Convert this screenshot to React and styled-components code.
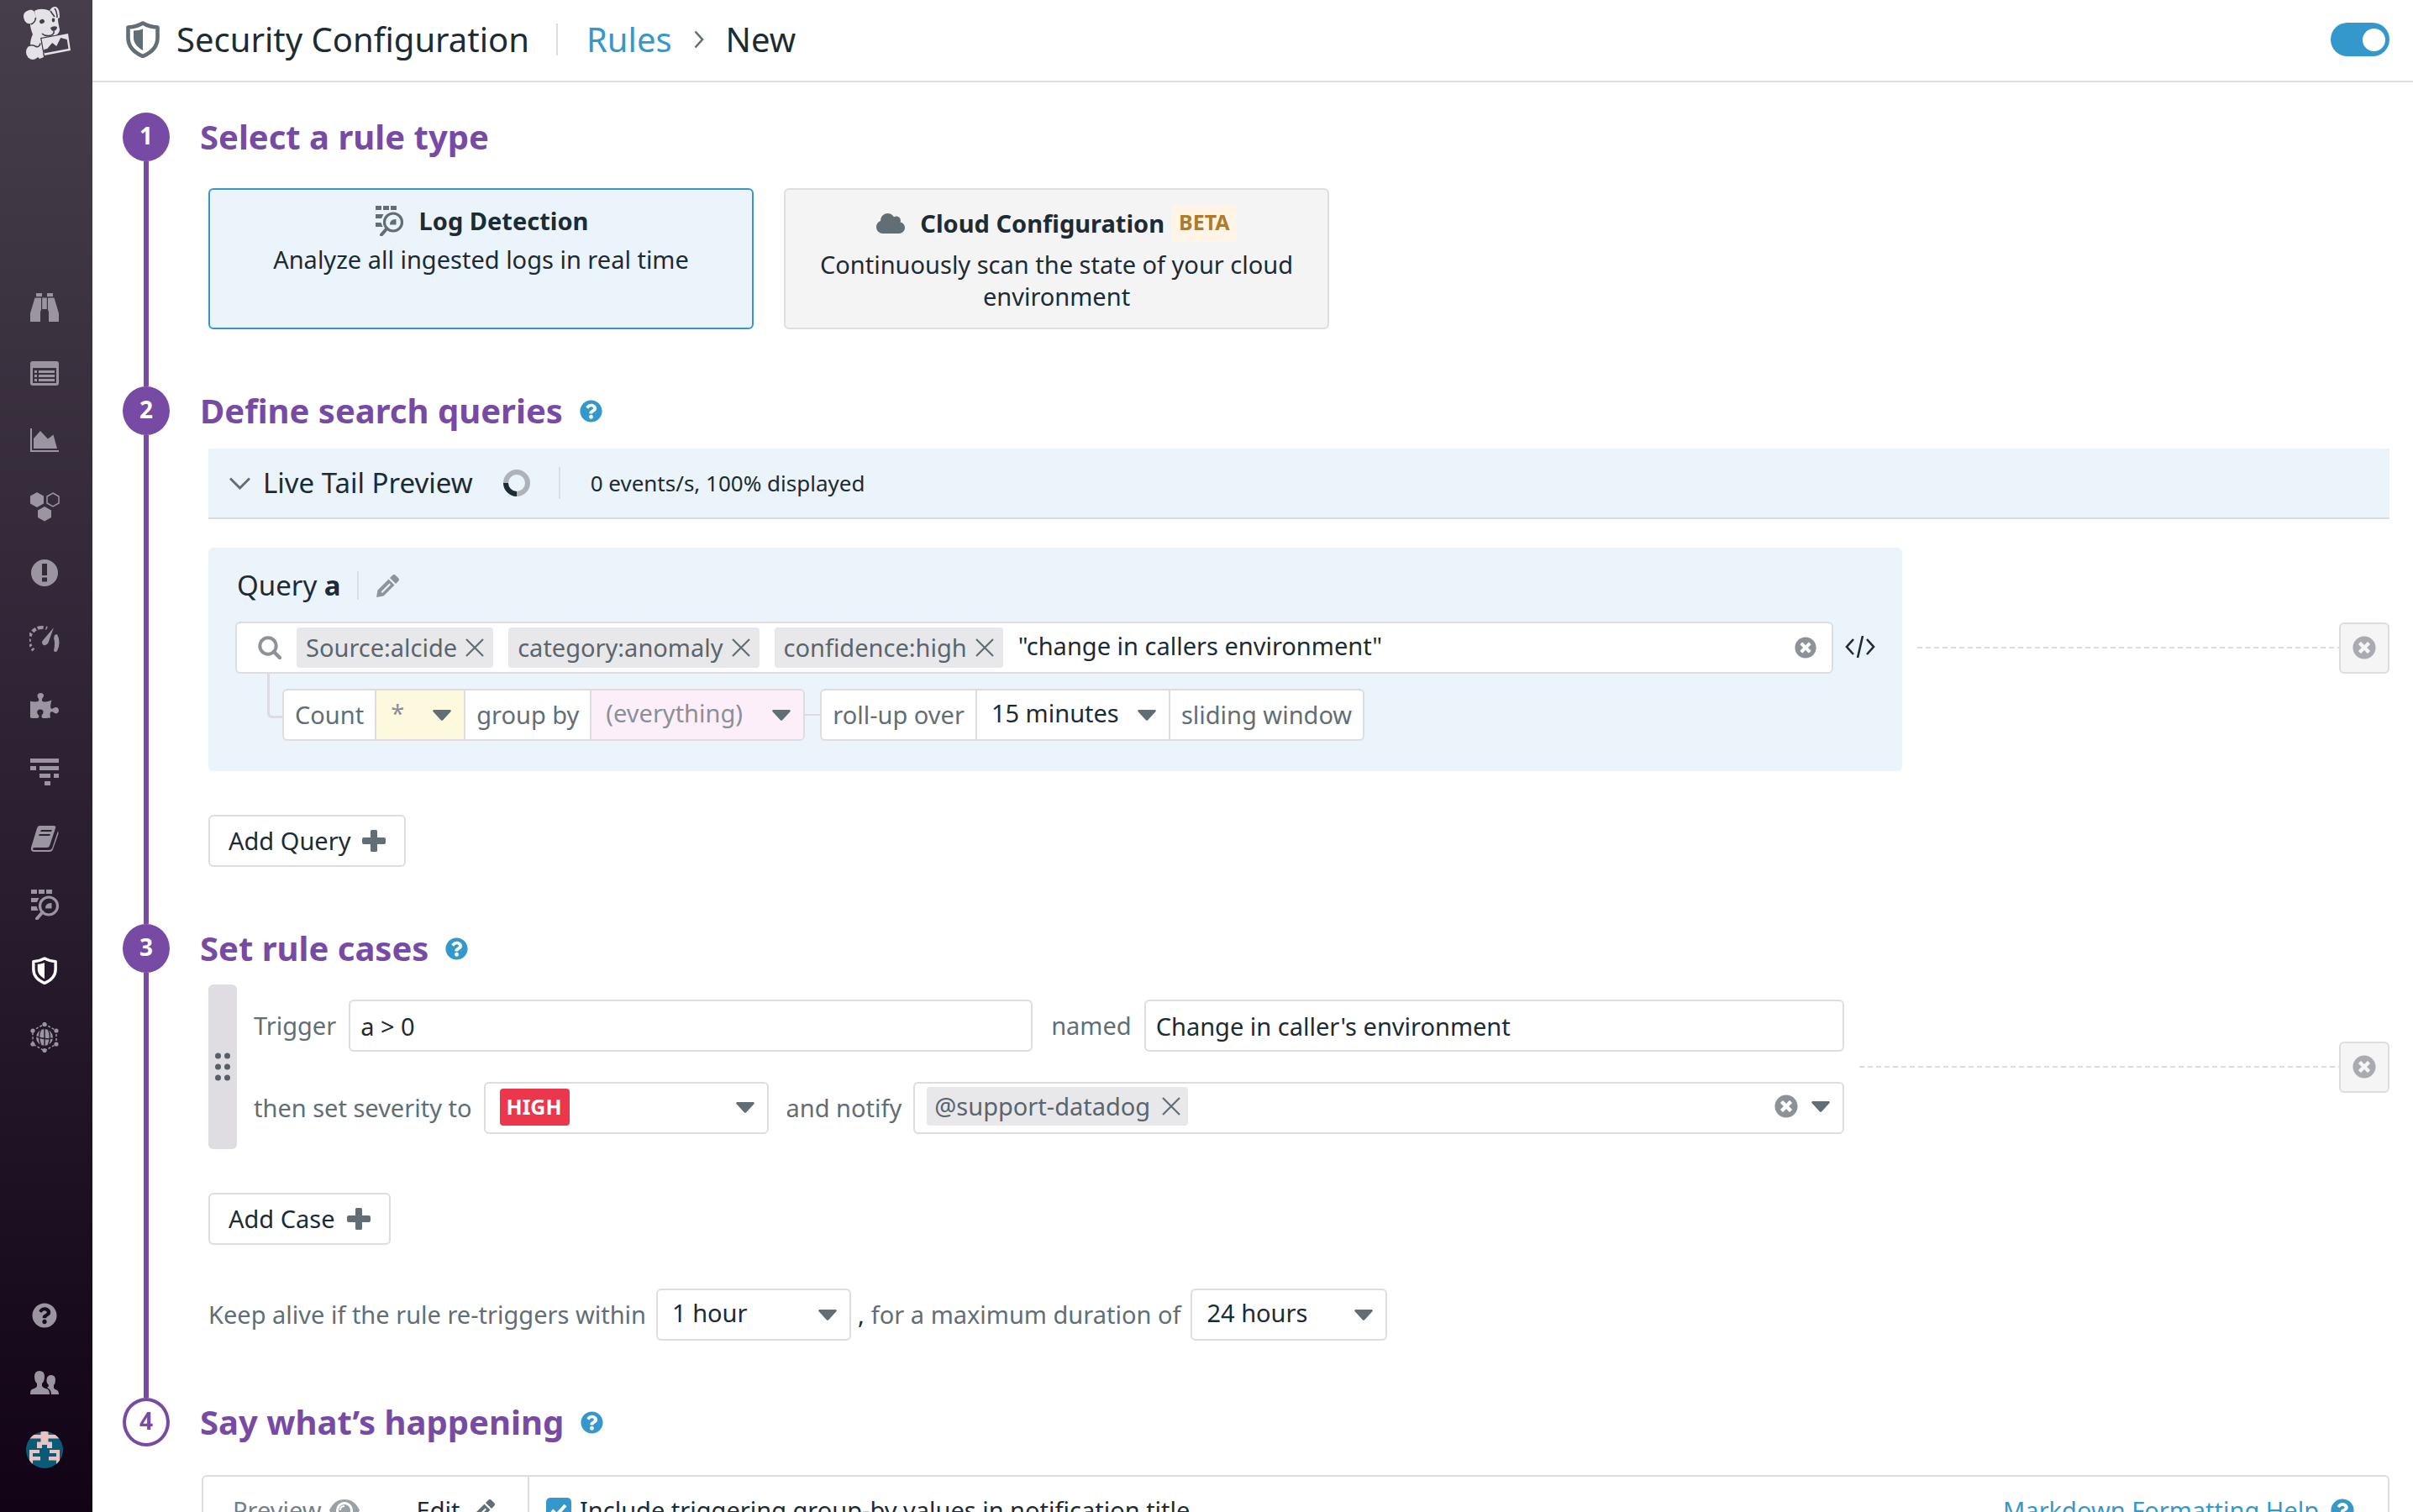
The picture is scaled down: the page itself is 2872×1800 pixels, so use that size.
import styled, { createGlobalStyle } from "styled-components";
import { FaCloud, FaPuzzlePiece, FaQuestionCircle, FaTimesCircle } from "react-icons/fa";

const purple = "#774aa4";
const blue = "#3598cc";
const ink = "#1c2b34";
const gray = "#626e75";
const line = "#dddddf";
const pale = "#ebf4fa";

const GlobalStyle = createGlobalStyle`
  * {
    box-sizing: border-box;
  }
  body {
    margin: 0;
    background: #fff;
    color: ${ink};
    font-family: "Noto Sans", sans-serif;
    font-size: 29px;
    line-height: 38px;
  }
  h1, h2, h3, p {
    margin: 0;
    font-weight: 400;
  }
  a {
    color: ${blue};
    text-decoration: none;
  }
  button, input, select {
    margin: 0;
    padding: 0;
    border: none;
    background: none;
    color: inherit;
    font: inherit;
    outline: none;
  }
  svg {
    display: block;
    flex: none;
  }
`;

/* ---------- shell ---------- */

const Shell = styled.div`
  display: flex;
  height: 100vh;
`;

const Sidebar = styled.nav`
  flex: none;
  display: flex;
  flex-direction: column;
  align-items: center;
  width: 110px;
  padding: 8px 4px 34px 0;
  background: linear-gradient(#463f4b, #3b3240 22%, #281c2f 60%, #120316);
`;

const Logo = styled.a`
  margin: 0 0 254px 5px;
  color: #e4e2e6;
`;

const NavItem = styled.a`
  display: flex;
  align-items: center;
  justify-content: center;
  width: 100%;
  height: ${(p) => (p.$low ? 80 : 79)}px;
  color: ${(p) => (p.$active ? "#fff" : "#9a95a0")};
`;

const Spacer = styled.div`
  flex: 1;
`;

const Main = styled.main`
  flex: 1;
  min-width: 0;
  overflow-y: auto;
  scrollbar-width: none;
`;

/* ---------- header ---------- */

const Header = styled.header`
  display: flex;
  align-items: center;
  height: 98px;
  padding: 0 28px 2px 40px;
  border-bottom: 2px solid ${line};
  font-size: 40px;
  line-height: 56px;
  color: ${gray};
`;

const PageTitle = styled.h1`
  margin-left: 20px;
  font-size: 40px;
  color: ${ink};
`;

const Divider = styled.span`
  width: 2px;
  height: ${(p) => p.$height || 38}px;
  background: #dddce2;
`;

const Crumbs = styled.div`
  display: flex;
  align-items: center;
  gap: 26px;
  flex: 1;
  margin-left: 32px;
`;

const CrumbLink = styled.a`
  margin-left: 8px;
`;

const Crumb = styled.span`
  color: ${ink};
`;

const Toggle = styled.input`
  appearance: none;
  display: flex;
  align-items: center;
  justify-content: flex-end;
  width: 70px;
  height: 40px;
  padding: 0 5px;
  border-radius: 20px;
  background: ${blue};

  &::before {
    content: "";
    width: 27px;
    height: 27px;
    border-radius: 50%;
    background: #fff;
  }
`;

/* ---------- steps ---------- */

const Steps = styled.div`
  padding: 36px 28px 0 36px;
`;

const StepRow = styled.section`
  display: flex;
  gap: 36px;
`;

const Rail = styled.div`
  flex: none;
  display: flex;
  flex-direction: column;
  align-items: center;
  width: 56px;
`;

const StepNumber = styled.span`
  display: flex;
  align-items: center;
  justify-content: center;
  width: 56px;
  height: 58px;
  padding-bottom: 4px;
  border: 4px solid ${purple};
  border-radius: 50%;
  background: ${(p) => (p.$open ? "#fff" : purple)};
  color: ${(p) => (p.$open ? purple : "#fff")};
  font-size: 28px;
  font-weight: 700;
`;

const RailLine = styled.span`
  flex: 1;
  width: 6px;
  background: ${purple};
`;

const StepContent = styled.div`
  flex: 1;
  min-width: 0;
  padding-bottom: 68px;
`;

const StepHead = styled.div`
  display: flex;
  align-items: center;
  gap: 20px;
  height: 58px;
  color: ${purple};
`;

const StepTitle = styled.h2`
  font-size: 40px;
  font-weight: 700;
`;

const HelpLink = styled.a`
  color: ${blue};
`;

const StepBody = styled.div`
  padding: ${(p) => p.$top}px 0 0 ${(p) => (p.$wide ? 2 : 10)}px;
`;

function Step({ number, title, help, top, wide, last, children }) {
  return (
    <StepRow>
      <Rail>
        <StepNumber $open={last}>{number}</StepNumber>
        {!last && <RailLine />}
      </Rail>
      <StepContent>
        <StepHead>
          <StepTitle>{title}</StepTitle>
          {help && (
            <HelpLink href="#help" aria-label="Help">
              <FaQuestionCircle size={27} />
            </HelpLink>
          )}
        </StepHead>
        <StepBody $top={top} $wide={wide}>{children}</StepBody>
      </StepContent>
    </StepRow>
  );
}

/* ---------- rule types ---------- */

const Cards = styled.div`
  display: flex;
  gap: 36px;
`;

const Card = styled.button`
  flex: 0 0 25%;
  display: flex;
  flex-direction: column;
  align-items: center;
  gap: 8px;
  height: 168px;
  padding: 18px 40px;
  border: 2px solid ${(p) => (p.$selected ? blue : "#dedede")};
  border-radius: 6px;
  background: ${(p) => (p.$selected ? pale : "#f4f4f4")};
`;

const CardTitle = styled.span`
  display: flex;
  align-items: center;
  gap: 18px;
  font-weight: 700;
  color: ${ink};

  svg {
    color: ${gray};
  }
`;

const Beta = styled.span`
  height: 44px;
  margin-left: -9px;
  padding: 0 8px;
  background: #fef5e7;
  color: #b07b29;
  font-size: 25px;
  line-height: 40px;
`;

/* ---------- form pieces ---------- */

const Button = styled.button`
  display: flex;
  align-items: center;
  gap: 14px;
  height: 62px;
  margin-top: 52px;
  padding: 0 22px;
  border: 2px solid ${line};
  border-radius: 6px;
  background: #fff;

  svg {
    color: ${gray};
  }
`;

const Field = styled.input`
  flex: ${(p) => p.$grow} 1 0;
  min-width: 0;
  height: 62px;
  padding: 0 12px;
  border: 2px solid ${line};
  border-radius: 6px;
  background: #fff;
`;

const Label = styled.label`
  flex: none;
  color: ${gray};
`;

const SelectWrap = styled.div`
  flex: none;
  display: grid;
  align-items: center;
  width: ${(p) => p.$width}px;
  height: 62px;
  border: 2px solid ${line};
  border-radius: 6px;
  background: #fff;

  svg {
    grid-area: 1 / 1;
    justify-self: end;
    margin-right: 15px;
    pointer-events: none;
    color: ${gray};
  }
`;

const SelectInput = styled.select`
  grid-area: 1 / 1;
  appearance: none;
  width: 100%;
  height: 58px;
  padding: 0 40px 4px 17px;
`;

const CaretIcon = () => (
  <svg width="22" height="13" viewBox="0 0 22 13" fill="currentColor" aria-hidden="true">
    <path d="M1.600 0h18.800c1.300 0 1.800 1.300 1 2.200L12.200 12.200c-.7.8-1.700.8-2.400 0L.6 2.200C-.2 1.300.300 0 1.600 0z" />
  </svg>
);

function Select({ id, value, width }) {
  return (
    <SelectWrap $width={width}>
      <SelectInput id={id}>
        <option>{value}</option>
      </SelectInput>
      <CaretIcon />
    </SelectWrap>
  );
}

const Tag = styled.span`
  flex: none;
  display: flex;
  align-items: center;
  gap: ${(p) => p.$gap || 10}px;
  height: ${(p) => (p.$gap ? 46 : 48)}px;
  padding: 0 ${(p) => (p.$gap ? 9 : 11)}px;
  border-radius: 4px;
  background: #e8e8eb;
  color: #5b656d;
`;

const PlainButton = styled.button`
  flex: none;
  color: ${(p) => p.$color || gray};
`;

const CrossIcon = () => (
  <svg width="22" height="22" viewBox="0 0 22 22" stroke="currentColor" strokeWidth="2.200" aria-hidden="true">
    <path d="M1 1l20 20M21 1L1 21" />
  </svg>
);

function RemovableTag({ text, gap }) {
  return (
    <Tag $gap={gap}>
      {text}
      <PlainButton aria-label={`Remove ${text}`}>
        <CrossIcon />
      </PlainButton>
    </Tag>
  );
}

const RemovableRow = styled.div`
  display: flex;
  align-items: center;
  margin-top: ${(p) => p.$top || 0}px;
`;

const RemoveSide = styled.div`
  flex: 1;
  display: flex;
  align-items: center;
  padding: 0 0 ${(p) => (p.$raised ? 28 : 0)}px 18px;
`;

const Dashes = styled.div`
  flex: 1;
  height: 2px;
  background: repeating-linear-gradient(90deg, #dcdcdf 0 6px, transparent 6px 10px);
`;

const RemoveButton = styled.button`
  flex: none;
  display: flex;
  align-items: center;
  justify-content: center;
  width: 60px;
  height: 61px;
  border: 2px solid ${line};
  border-radius: 6px;
  background: #f5f5f5;
  color: #a9abb0;
`;

function Remove({ label, raised }) {
  return (
    <RemoveSide $raised={raised}>
      <Dashes />
      <RemoveButton aria-label={label}>
        <FaTimesCircle size={28} />
      </RemoveButton>
    </RemoveSide>
  );
}

/* ---------- queries ---------- */

const TailBar = styled.div`
  display: flex;
  align-items: center;
  height: 84px;
  padding-left: 25px;
  border-bottom: 2px solid #dadde0;
  background: ${pale};
`;

const TailTitle = styled.h3`
  margin: 0 36px 0 15px;
  font-size: 33px;
`;

const TailStats = styled.span`
  margin-left: 36px;
  font-size: 26px;
`;

const Spinner = styled.span`
  width: 32px;
  height: 32px;
  margin-right: 34px;
  border: 6px solid #adb3b9;
  border-left-color: ${ink};
  border-radius: 50%;
  transform: rotate(-45deg);
`;

const QueryPanel = styled.div`
  width: calc(100% - 580px);
  padding: 28px 32px 36px;
  border-radius: 6px;
  background: ${pale};
`;

const QueryHead = styled.div`
  display: flex;
  align-items: center;
  gap: 21px;
  height: 34px;
  margin: 0 0 26px 2px;
  color: #8d959b;
`;

const QueryName = styled.h3`
  margin-right: -2px;
  font-size: 33px;
  color: ${ink};
`;

const QueryLine = styled.div`
  display: flex;
  align-items: center;
  gap: 14px;
`;

const InputBox = styled.div`
  flex: 1;
  display: flex;
  align-items: center;
  gap: ${(p) => (p.$notify ? 16 : 18)}px;
  min-width: 0;
  height: 62px;
  padding: ${(p) => (p.$notify ? "0 15px 4px 14px" : "0 18px 0 25px")};
  border: 2px solid ${line};
  border-radius: 6px;
  background: #fff;
  color: #8d9298;
`;

const SearchInput = styled.input`
  flex: 1;
  min-width: 0;
  padding-bottom: 4px;
  color: ${ink};
`;

const Aggregation = styled.div`
  display: flex;
  padding-left: 38px;
`;

const Elbow = styled.span`
  width: 18px;
  height: 53px;
  border: solid #dcdae2;
  border-width: 0 0 3px 3px;
  border-bottom-left-radius: 6px;
`;

const Link = styled.span`
  align-self: center;
  width: 18px;
  height: 2px;
  margin-top: 18px;
  background: #dcdae2;
`;

const Group = styled.div`
  display: flex;
  height: 62px;
  margin-top: 18px;
  border: 2px solid ${line};
  border-radius: 6px;
  background: #fff;
  overflow: hidden;
`;

const GroupLabel = styled.span`
  padding: 0 13px;
  color: ${gray};
  line-height: 58px;
`;

const GroupSelect = styled(SelectWrap)`
  height: 58px;
  border-width: 0 2px;
  border-radius: 0;
  background: ${(p) => p.$tint || "#fff"};
  color: ${(p) => (p.$tint ? "#8b9097" : ink)};
  ${(p) => p.$end && "border-right: none;"}
`;

/* ---------- cases ---------- */

const Case = styled.div`
  display: flex;
  gap: 20px;
  width: calc(100% - 649px);
`;

const Handle = styled.div`
  flex: none;
  display: flex;
  align-items: center;
  justify-content: center;
  width: 34px;
  border-radius: 6px;
  background: #dfdce2;
  color: #575f66;
`;

const CaseRows = styled.div`
  flex: 1;
  display: flex;
  flex-direction: column;
  gap: 36px;
  min-width: 0;
  padding: 18px 0;
`;

const FormRow = styled.div`
  display: flex;
  align-items: center;
  gap: ${(p) => p.$gap}px;
  margin-top: ${(p) => p.$top || 0}px;
`;

const MidLabel = styled(Label)`
  margin-left: 7px;
`;

const SeverityBox = styled.div`
  flex: none;
  display: flex;
  align-items: center;
  justify-content: space-between;
  width: 339px;
  height: 62px;
  padding: 0 15px 2px 17px;
  border: 2px solid ${line};
  border-radius: 6px;
  color: ${gray};
`;

const SeveritySelect = styled.select`
  appearance: none;
  height: 44px;
  padding: 0 8px 2px;
  border-radius: 4px;
  background: #eb364b;
  color: #fff;
  font-size: 25px;
  font-weight: 700;
`;

const Comma = styled.span`
  margin: 0 -4px;
`;

/* ---------- message ---------- */

const Editor = styled.div`
  display: flex;
  height: 420px;
  border: 2px solid ${line};
  border-radius: 6px;
`;

const Tabs = styled.div`
  flex: none;
  display: flex;
  align-items: center;
  gap: 68px;
  width: 388px;
  height: 80px;
  padding-left: 35px;
  border-right: 2px solid ${line};
`;

const Tab = styled.button`
  display: flex;
  align-items: center;
  gap: ${(p) => (p.$active ? 15 : 9)}px;
  color: ${(p) => (p.$active ? ink : "#747e85")};

  svg {
    color: ${gray};
  }
`;

const EditorBar = styled.div`
  flex: 1;
  display: flex;
  align-items: center;
  justify-content: space-between;
  height: 80px;
  padding: 0 40px 0 20px;
`;

const CheckLabel = styled.label`
  display: flex;
  align-items: center;
  gap: 10px;
`;

const CheckWrap = styled.span`
  display: grid;
  place-items: center;

  svg, input {
    grid-area: 1 / 1;
  }
  svg {
    z-index: 1;
    pointer-events: none;
  }
`;

const Check = styled.input`
  appearance: none;
  width: 30px;
  height: 30px;
  border-radius: 5px;
  background: ${blue};
`;

const HelpText = styled.a`
  display: flex;
  align-items: center;
  gap: 14px;
`;

/* ---------- icons ---------- */

const Icon = ({ size = 36, box = 36, children }) => (
  <svg width={size} height={size} viewBox={`0 0 ${box} ${box}`} fill="currentColor" aria-hidden="true">
    {children}
  </svg>
);

const DogIcon = () => (
  <svg width="56" height="64" viewBox="0 0 56 64" fill="currentColor" aria-hidden="true">
    <path d="M7 4c4-1 7 2 7 6 1 5-1 9-5 10-5 1-8-2-9-8C0 7 3 5 7 4z" />
    <path d="M13 5c5-3 12-3 18 0 2-4 4-5 7-5 4 1 5 6 5 13l-2 1c0 5 1 8 2 13 0 3-2 6-5 7l-17 4 3 22-5 2c-3-3-6-8-11-16 0-5 1-9 3-13C9 28 8 24 8 21c5-1 7-5 6-12z" />
    <ellipse cx="11" cy="54" rx="8" ry="9" />
    <path
      d="M20 43.500q-1 5-5 4-4-3-9-1M9 21q5-2 5.500-8M32 5q2 3 5 7M22 32q4 4 11 2 4-2 3-5M37 2q3 4 3 11"
      fill="none"
      stroke="#453e4a"
      strokeWidth="1.600"
    />
    <ellipse cx="22" cy="17.500" rx="3" ry="2.600" fill="#453e4a" transform="rotate(-25 22 17.500)" />
    <ellipse cx="35.500" cy="16" rx="1.800" ry="2.400" fill="#453e4a" />
    <path d="M32 25q4-3 8-1 0 4-4 5-3 0-4-4z" fill="#453e4a" />
    <path d="M20 37l34-6 3 22-33 6z" fill="#453e4a" />
    <path fillRule="evenodd" d="M21.500 38L53 32l3 20-31 6zM24 55.500l29.500-5.500-1.800-11-7.500-2-5 10-5-4-6 7-4 1z" />
  </svg>
);

const BinocularsIcon = () => (
  <Icon>
    <path d="M8 1h7v4H8zM21 1h7v4h-7zM6.500 6.500H14V21q-1 1-1 3v11H1V25zM29.500 6.500H22V21q1 1 1 3v11h12V25zM15.200 6.500h5.600V20h-5.600z" />
  </Icon>
);

const ListIcon = () => (
  <Icon>
    <path fillRule="evenodd" d="M4 3h28q3 0 3 3v23q0 3-3 3H4q-3 0-3-3V6q0-3 3-3zM4 11v18h28V11z" />
    <path d="M6 14h3v3H6zM11 14h19v3H11zM6 19h3v3H6zM11 19h19v3H11zM6 24h3v3H6zM11 24h19v3H11z" />
  </Icon>
);

const AreaIcon = () => (
  <Icon>
    <path d="M1 4h2v26h32v2H1zM5 28V16l8-9 9 9.500 6.500-5L33 28z" />
  </Icon>
);

const HexIcon = () => (
  <Icon>
    <path d="M9 1l8 4.500v9L9 19l-8-4.500v-9zM18 18l8 4.500v8.500L18 35.500l-8-4.500v-8.500z" />
    <path d="M28 2l7 4v8l-7 4-7-4V6z" fill="none" stroke="currentColor" strokeWidth="1.500" />
  </Icon>
);

const AlertIcon = () => (
  <Icon>
    <path fillRule="evenodd" d="M18 2a16 16 0 100 32 16 16 0 000-32zM15 7h6v14h-6zM15 23.500h6v5h-6z" />
  </Icon>
);

const GaugeIcon = () => (
  <Icon>
    <path d="M29 4L22.500 22q-2 4-5.500 3-3-2-1.500-5z" />
    <path d="M30 13l3-1q5 10 0 20-2 2-4 0 2-10 0-15z" />
    <path
      d="M5 31A15.500 15.500 0 0121 5"
      fill="none"
      stroke="currentColor"
      strokeWidth="4"
      strokeDasharray="2.500 3 3 3 3.500 3 4 2.500 5 2 7 3"
    />
  </Icon>
);

const TraceIcon = () => (
  <Icon>
    <path d="M1 2h34v5H1zM1 11h7v5H1zM12 11h23v5H12zM12 20h13v5H12zM29 20h6v5h-6zM18 29h7v5h-7z" />
  </Icon>
);

const BookIcon = () => (
  <Icon>
    <path
      fillRule="evenodd"
      d="M12 3h17q3 0 2 3l-7 21q-1 2-3 2H6q-2 0-2 1.500T6 32h17q3 0 4-2l7-21q1 3 0 5l-6 17q-1 3-4 3H6q-5 0-4-5L9 6q1-3 3-3zM14 8l-1 2h13l1-2zM12 13l-1 2h13l1-2z"
    />
  </Icon>
);

const LogsIcon = () => (
  <Icon>
    <path d="M2 0h7v5H2zM11 0h7v5h-7zM20 0h7v5h-7zM2 10h9.500L9 15H2zM2 20h6.500l2 5H2z" />
    <circle cx="23" cy="19.500" r="10.500" fill="none" stroke="currentColor" strokeWidth="3.200" />
    <path d="M15.500 27L9 34.500" stroke="currentColor" strokeWidth="4" strokeLinecap="round" />
    <path d="M19 22.500q0-7 7.500-6.500v6.500z" />
  </Icon>
);

const ShieldIcon = ({ width, height }) => (
  <svg width={width} height={height} viewBox="0 0 40 44" fill="none" aria-hidden="true">
    <path
      d="M20 2.500c5 3 10 4.500 17.500 5V20c0 9-6 17-17.500 22C8.500 37 2.500 29 2.500 20V7.500C10 7 15 5.500 20 2.500z"
      stroke="currentColor"
      strokeWidth="4.600"
      strokeLinejoin="round"
    />
    <path d="M20 9.500v25.500C13 31 9 26 9 20v-8.500c4 0 8-.8 11-2z" fill="currentColor" />
  </svg>
);

const NetworkIcon = () => (
  <Icon>
    <path d="M18 2l14 8v16l-14 8-14-8V10z" fill="none" stroke="currentColor" strokeWidth="1.500" strokeDasharray="3 2" />
    {[[18, 2.500], [32, 10], [32, 26], [18, 33.500], [4, 26], [4, 10]].map(([x, y]) => (
      <circle key={`${x}-${y}`} cx={x} cy={y} r="2.600" />
    ))}
    <circle cx="18" cy="18" r="10" />
    <path
      d="M18 7v22M8 17q10 4 20 2M14 8q-5 9 0 20M22 8q5 9 0 20"
      fill="none"
      stroke="#2b2032"
      strokeWidth="1.500"
    />
  </Icon>
);

const UsersIcon = () => (
  <Icon>
    <path d="M12 4q6 0 6 7 0 5-3 8v3q1 2 6 3.500 3 1 3 6.500H1q0-5 2-6 6-2 6-4v-3q-3-3-3-8 0-7 6-7z" />
    <path d="M26 9q5 0 5 6 0 4-2 6v3q0 1.500 3 2.500t3 5.500h-9q0-6-5-8 2-1 2-3-3-3-2.500-6.500Q21 9 26 9z" />
  </Icon>
);

const AvatarIcon = () => (
  <svg width="44" height="44" viewBox="0 0 44 44" aria-hidden="true">
    <clipPath id="avatar">
      <circle cx="22" cy="22" r="22" />
    </clipPath>
    <g clipPath="url(#avatar)">
      <path fill="#0b5b78" d="M0 0h44v44H0z" />
      <path
        fill="#e9c4c2"
        d="M17.500 0h9v4H44v4.500H26.500v4H31V20h-6v-4h-6v4h-6v-7.500h4.500v-4H0V4h17.500zM4 22h12v4H8v4h9v4.500H8V44H4zM40 22H28v4h8v4h-9v4.500h9V44h4z"
      />
    </g>
  </svg>
);

const ChevronRight = () => (
  <svg width="12" height="22" viewBox="0 0 12 22" fill="none" stroke="currentColor" strokeWidth="2.600" aria-hidden="true">
    <path d="M1.500 1.500L10 11l-8.500 9.500" />
  </svg>
);

const ChevronDown = () => (
  <svg width="25" height="15" viewBox="0 0 25 15" fill="none" stroke={gray} strokeWidth="3" aria-hidden="true">
    <path d="M1 1.500L12.500 13 24 1.500" />
  </svg>
);

const PlusIcon = () => (
  <Icon size={28} box={28}>
    <path d="M11.500 1h5q1.500 0 1.500 1.500V10h8q2 0 2 2v4q0 2-2 2h-8v7.500q0 1.500-1.500 1.500h-5q-1.500 0-1.500-1.500V18H2q-2 0-2-2v-4q0-2 2-2h8V2.500Q10 1 11.500 1z" />
  </Icon>
);

const PencilIcon = () => (
  <Icon size={27} box={27}>
    <path fillRule="evenodd" d="M0 27l1.500-8.500L14.500 5.500l7 7L8.500 25.500zM5.500 20.500l1.500 1.500 10-10-1.500-1.500z" />
    <path d="M16 4l3-3q2-2 4 0l3 3q2 2 0 4l-3 3z" />
  </Icon>
);

const SearchIcon = () => (
  <Icon size={28} box={28}>
    <circle cx="12" cy="12" r="9.700" fill="none" stroke="currentColor" strokeWidth="4" />
    <path d="M19 19l7 7" stroke="currentColor" strokeWidth="4.500" strokeLinecap="round" />
  </Icon>
);

const CodeIcon = () => (
  <svg width="36" height="28" viewBox="0 0 36 28" fill="none" stroke={ink} strokeWidth="2.600" aria-hidden="true">
    <path d="M10 4L2 13l8 9M26 4l8 9-8 9M21 0l-6 26" />
  </svg>
);

const GripIcon = () => (
  <svg width="18" height="34" viewBox="0 0 18 34" fill="currentColor" aria-hidden="true">
    {[4, 17, 30].map((y) => (
      <g key={y}>
        <circle cx="3.500" cy={y} r="3.500" />
        <circle cx="14.500" cy={y} r="3.500" />
      </g>
    ))}
  </svg>
);

const EyeIcon = () => (
  <svg width="36" height="28" viewBox="0 0 36 28" aria-hidden="true">
    <path d="M0 14Q6 1 18 1t18 13q-6 13-18 13T0 14z" fill="#9ba0a5" />
    <circle cx="18" cy="14" r="10" fill="#fff" />
    <circle cx="18" cy="14" r="7" fill="#9ba0a5" />
    <path d="M13 14q0-5 5-5" fill="none" stroke="#fff" strokeWidth="2" />
  </svg>
);

const CheckIcon = () => (
  <svg width="20" height="16" viewBox="0 0 20 16" fill="none" stroke="#fff" strokeWidth="4" aria-hidden="true">
    <path d="M2 8l5.500 5.500L18 2" />
  </svg>
);

/* ---------- page ---------- */

const navItems = [
  { name: "Watchdog", icon: <BinocularsIcon /> },
  { name: "Events", icon: <ListIcon /> },
  { name: "Dashboards", icon: <AreaIcon /> },
  { name: "Infrastructure", icon: <HexIcon /> },
  { name: "Monitors", icon: <AlertIcon /> },
  { name: "Metrics", icon: <GaugeIcon /> },
  { name: "Integrations", icon: <FaPuzzlePiece size={34} /> },
  { name: "APM", icon: <TraceIcon /> },
  { name: "Notebooks", icon: <BookIcon /> },
  { name: "Logs", icon: <LogsIcon /> },
  { name: "Security", icon: <ShieldIcon width={30} height={33} />, active: true },
  { name: "Synthetics", icon: <NetworkIcon /> },
];

const footerItems = [
  { name: "Help", icon: <FaQuestionCircle size={30} /> },
  { name: "Team", icon: <UsersIcon /> },
  { name: "Account", icon: <AvatarIcon /> },
];

const tags = ["Source:alcide", "category:anomaly", "confidence:high"];

export default function App() {
  return (
    <>
      <GlobalStyle />
      <Shell>
        <Sidebar>
          <Logo href="#home" aria-label="Home">
            <DogIcon />
          </Logo>
          {navItems.map((item) => (
            <NavItem key={item.name} href="#nav" aria-label={item.name} $active={item.active}>
              {item.icon}
            </NavItem>
          ))}
          <Spacer />
          {footerItems.map((item) => (
            <NavItem key={item.name} href="#nav" aria-label={item.name} $low>
              {item.icon}
            </NavItem>
          ))}
        </Sidebar>

        <Main>
          <Header>
            <ShieldIcon width={40} height={44} />
            <PageTitle>Security Configuration</PageTitle>
            <Crumbs>
              <Divider />
              <CrumbLink href="#rules">Rules</CrumbLink>
              <ChevronRight />
              <Crumb>New</Crumb>
            </Crumbs>
            <Toggle type="checkbox" aria-label="Enable rule" defaultChecked />
          </Header>

          <Steps>
            <Step number={1} title="Select a rule type" top={32}>
              <Cards>
                <Card $selected>
                  <CardTitle>
                    <LogsIcon />
                    Log Detection
                  </CardTitle>
                  <span>Analyze all ingested logs in real time</span>
                </Card>
                <Card>
                  <CardTitle>
                    <FaCloud size={34} />
                    Cloud Configuration
                    <Beta>BETA</Beta>
                  </CardTitle>
                  <span>Continuously scan the state of your cloud environment</span>
                </Card>
              </Cards>
            </Step>

            <Step number={2} title="Define search queries" help top={16}>
              <TailBar>
                <ChevronDown />
                <TailTitle>Live Tail Preview</TailTitle>
                <Spinner />
                <Divider />
                <TailStats>0 events/s, 100% displayed</TailStats>
              </TailBar>
              <RemovableRow $top={34}>
                <QueryPanel>
                  <QueryHead>
                    <QueryName>
                      Query <b>a</b>
                    </QueryName>
                    <Divider $height={34} />
                    <PlainButton aria-label="Rename query" $color="#8d959b">
                      <PencilIcon />
                    </PlainButton>
                  </QueryHead>
                  <QueryLine>
                    <InputBox>
                      <SearchIcon />
                      {tags.map((tag) => (
                        <RemovableTag key={tag} text={tag} />
                      ))}
                      <SearchInput aria-label="Search query" defaultValue={'"change in callers environment"'} />
                      <PlainButton aria-label="Clear search" $color="#8d9298">
                        <FaTimesCircle size={26} />
                      </PlainButton>
                    </InputBox>
                    <PlainButton aria-label="Edit as text">
                      <CodeIcon />
                    </PlainButton>
                  </QueryLine>
                  <Aggregation>
                    <Elbow />
                    <Group>
                      <GroupLabel>Count</GroupLabel>
                      <GroupSelect $width={108} $tint="#fdf9de">
                        <SelectInput aria-label="Count of">
                          <option>*</option>
                        </SelectInput>
                        <CaretIcon />
                      </GroupSelect>
                      <GroupLabel>group by</GroupLabel>
                      <GroupSelect $width={254} $tint="#fdeff9" $end>
                        <SelectInput aria-label="Group by">
                          <option>(everything)</option>
                        </SelectInput>
                        <CaretIcon />
                      </GroupSelect>
                    </Group>
                    <Link />
                    <Group>
                      <GroupLabel>roll-up over</GroupLabel>
                      <GroupSelect $width={232}>
                        <SelectInput aria-label="Roll-up window">
                          <option>15 minutes</option>
                        </SelectInput>
                        <CaretIcon />
                      </GroupSelect>
                      <GroupLabel>sliding window</GroupLabel>
                    </Group>
                  </Aggregation>
                </QueryPanel>
                <Remove label="Remove query" raised />
              </RemovableRow>
              <Button>
                Add Query
                <PlusIcon />
              </Button>
            </Step>

            <Step number={3} title="Set rule cases" help top={14}>
              <RemovableRow>
                <Case>
                  <Handle>
                    <GripIcon />
                  </Handle>
                  <CaseRows>
                    <FormRow $gap={15}>
                      <Label htmlFor="trigger">Trigger</Label>
                      <Field id="trigger" $grow={815} defaultValue="a > 0" />
                      <MidLabel htmlFor="named">named</MidLabel>
                      <Field id="named" $grow={835} defaultValue="Change in caller's environment" />
                    </FormRow>
                    <FormRow $gap={14}>
                      <Label htmlFor="severity">then set severity to</Label>
                      <SeverityBox>
                        <SeveritySelect id="severity">
                          <option>HIGH</option>
                        </SeveritySelect>
                        <CaretIcon />
                      </SeverityBox>
                      <MidLabel htmlFor="notify">and notify</MidLabel>
                      <InputBox $notify>
                        <RemovableTag text="@support-datadog" gap={14} />
                        <SearchInput id="notify" />
                        <PlainButton aria-label="Clear recipients" $color="#8d9298">
                          <FaTimesCircle size={28} />
                        </PlainButton>
                        <PlainButton aria-label="Show recipients">
                          <CaretIcon />
                        </PlainButton>
                      </InputBox>
                    </FormRow>
                  </CaseRows>
                </Case>
                <Remove label="Remove case" />
              </RemovableRow>
              <Button>
                Add Case
                <PlusIcon />
              </Button>
              <FormRow $top={52} $gap={12}>
                <Label htmlFor="keep-alive">Keep alive if the rule re-triggers within</Label>
                <Select id="keep-alive" value="1 hour" width={232} />
                <Comma>,</Comma>
                <Label htmlFor="max-duration">for a maximum duration of</Label>
                <Select id="max-duration" value="24 hours" width={234} />
              </FormRow>
            </Step>

            <Step number={4} title="Say what’s happening" help top={34} wide last>
              <Editor>
                <Tabs>
                  <Tab>
                    Preview
                    <EyeIcon />
                  </Tab>
                  <Tab $active>
                    Edit
                    <PencilIcon />
                  </Tab>
                </Tabs>
                <EditorBar>
                  <CheckLabel>
                    <CheckWrap>
                      <Check type="checkbox" defaultChecked />
                      <CheckIcon />
                    </CheckWrap>
                    Include triggering group-by values in notification title
                  </CheckLabel>
                  <HelpText href="#markdown">
                    Markdown Formatting Help
                    <FaQuestionCircle size={28} />
                  </HelpText>
                </EditorBar>
              </Editor>
            </Step>
          </Steps>
        </Main>
      </Shell>
    </>
  );
}
